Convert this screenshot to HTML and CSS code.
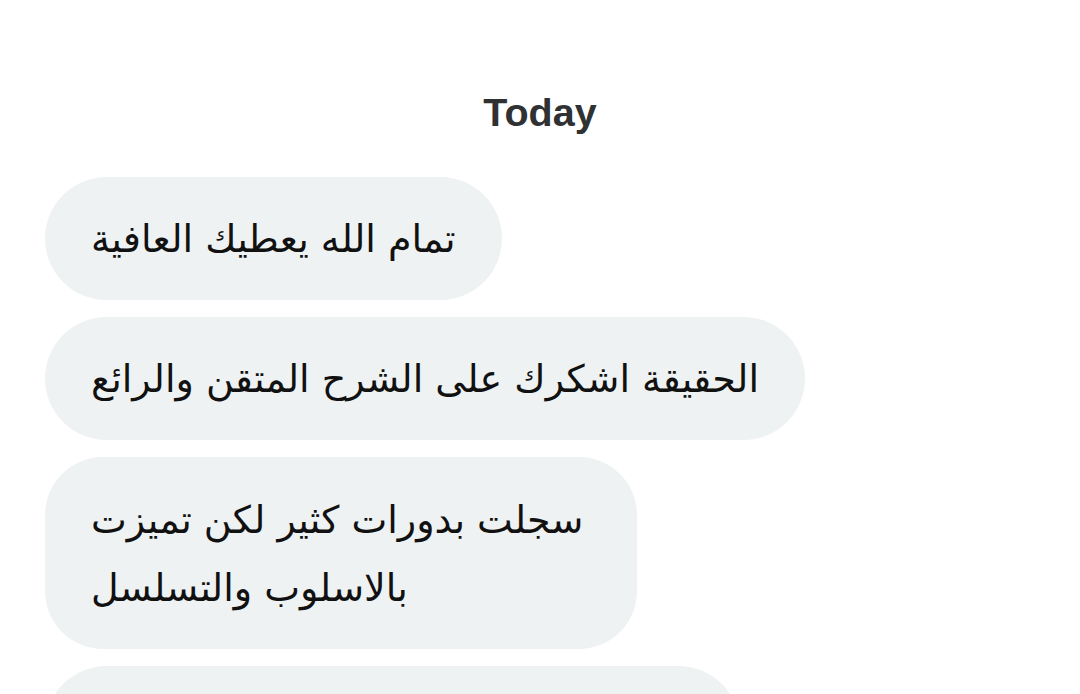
FILE: index.html
```html
<!DOCTYPE html>
<html lang="ar">
<head>
<meta charset="utf-8">
<link rel="stylesheet" href="styles.css">
</head>
<body>
<div class="chat">
  <div class="day">Today</div>
  <div class="msg" dir="rtl">تمام الله يعطيك العافية</div>
  <div class="msg" dir="rtl">الحقيقة اشكرك على الشرح المتقن والرائع</div>
  <div class="msg multi" dir="rtl">سجلت بدورات كثير لكن تميزت<br>بالاسلوب والتسلسل</div>
  <div class="msg last" dir="rtl">&nbsp;</div>
</div>
</body>
</html>
```
FILE: styles.css
```css
html, body {
  margin: 0;
  padding: 0;
  background: #ffffff;
  overflow: hidden;
}
.chat {
  display: flex;
  flex-direction: column;
  align-items: flex-start;
  gap: 17px;
  padding: 89px 0 0 45px;
}
.day {
  align-self: stretch;
  margin-left: -45px;
  text-align: center;
  font-family: "Liberation Sans", Arial, sans-serif;
  font-weight: bold;
  font-size: 39.5px;
  line-height: 46px;
  color: #2f3133;
  margin-bottom: 25px;
}
.msg {
  background: #eef2f3;
  border-radius: 62px;
  padding: 28px 46px 27px;
  font-family: "DejaVu Sans", sans-serif;
  font-size: 38px;
  line-height: 68px;
  color: #111;
  text-align: left;
}
.msg.multi {
  padding-top: 29px;
  border-radius: 58px;
  padding-right: 54px;
}
.msg.last {
  width: 603px;
}
```
